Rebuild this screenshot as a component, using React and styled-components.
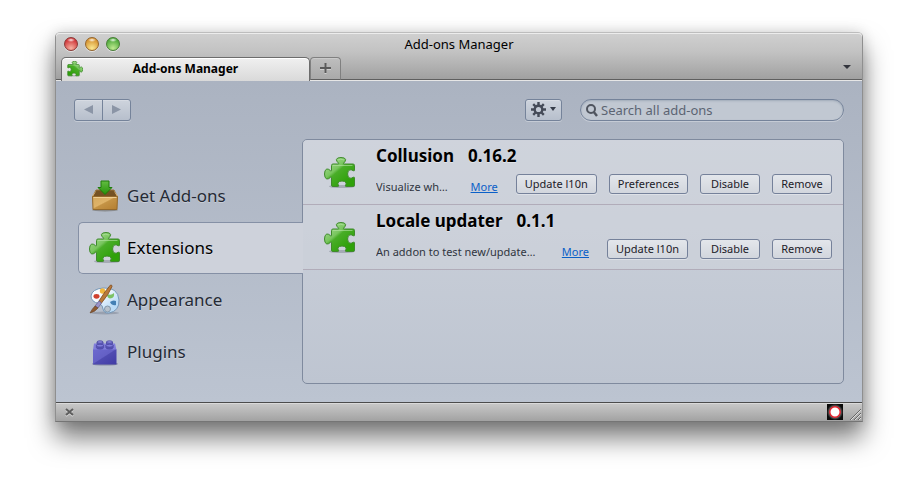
import React from "react";
import styled, { createGlobalStyle, css } from "styled-components";

const GlobalStyle = createGlobalStyle`
  *, *::before, *::after { box-sizing: border-box; }
  body {
    margin: 0;
    background: #fff;
    color: #000;
    font-family: "Lucida Grande", "Noto Sans", "Open Sans", sans-serif;
    font-size: 11px;
  }
  button, input { font: inherit; color: inherit; }
  h1, h2, p { margin: 0; }
  svg { display: block; flex: none; }
`;

const Desktop = styled.div`
  min-height: 100vh;
  display: flex;
  padding: 32px 55px 78px;
`;

const Window = styled.div`
  flex: 1;
  min-width: 0;
  display: flex;
  flex-direction: column;
  border: 1px solid #8f8f8f;
  border-top-color: #bdbdbd;
  border-bottom-color: #757575;
  border-radius: 5px 5px 0 0;
  box-shadow: 0 16px 26px rgba(0, 0, 0, 0.52), 0 0 14px rgba(0, 0, 0, 0.14);
`;

const TitleBar = styled.header`
  background: linear-gradient(#d0d0d0, #c2c2c2 40%, #9e9e9e);
  border-radius: 4px 4px 0 0;
  box-shadow: inset 0 1px #ececec;
`;

const TitleRow = styled.div`
  display: grid;
  grid-template-columns: 80px 1fr 80px;
  align-items: center;
  height: 24px;
  padding-bottom: 2px;
`;

const Lights = styled.div`
  display: flex;
  gap: 7px;
  padding-left: 8px;
`;

const Light = styled.button`
  width: 14px;
  height: 14px;
  padding: 0;
  border: 1px solid ${(p) => p.$edge};
  border-radius: 50%;
  background:
    radial-gradient(ellipse 4px 2px at 50% 2px, rgba(255, 255, 255, 0.9), transparent),
    radial-gradient(circle at 50% 85%, ${(p) => p.$glow}, ${(p) => p.$tone} 75%);
  box-shadow: 0 1px rgba(255, 255, 255, 0.5);
`;

const WindowTitle = styled.h1`
  text-align: center;
  font-size: 13px;
  font-weight: 400;
  line-height: 20px;
`;

const TabStrip = styled.div`
  display: flex;
  align-items: flex-end;
  height: 24px;
  padding: 0 10px 0 5px;
  box-shadow: inset 0 -1px #e6e6e6, inset 0 -2px #5f5f5f;
`;

const Tab = styled.button`
  display: flex;
  align-items: center;
  width: 249px;
  height: 24px;
  padding: 0 5px 2px;
  border: 1px solid #6c6c6c;
  border-bottom: 0;
  border-radius: 5px 5px 0 0;
  background: linear-gradient(#f0f0f0, #d9d9d9);
  box-shadow: inset 0 1px #fff;
  font-size: 12px;
  font-weight: 700;
  line-height: 16px;

  span { flex: 1; padding-right: 16px; text-align: center; }
`;

const NewTab = styled.button`
  display: grid;
  place-items: center;
  width: 31px;
  height: 23px;
  margin-bottom: 1px;
  padding: 0;
  border: 1px solid #808080;
  border-bottom-color: #5f5f5f;
  border-radius: 4px 4px 0 0;
  background: linear-gradient(#bebebe, #a9a9a9);
  box-shadow: inset 0 1px #cacaca;
`;

const TabList = styled.button`
  align-self: center;
  display: grid;
  place-items: center;
  width: 10px;
  height: 16px;
  margin-left: auto;
  padding: 0 0 4px;
  border: 0;
  background: none;
`;

const Content = styled.main`
  flex: 1;
  display: flex;
  flex-direction: column;
  gap: 18px;
  padding: 18px;
  background: linear-gradient(#abb3c1, #bcc4d1);
`;

const Toolbar = styled.div`
  display: flex;
  align-items: center;
`;

const raised = css`
  border: 1px solid #75839a;
  border-radius: 3px;
  background: linear-gradient(#ced4dd, #b7bfcc);
  box-shadow: 0 1px rgba(255, 255, 255, 0.3), inset 0 1px rgba(255, 255, 255, 0.2);
`;

const NavGroup = styled.div`
  ${raised}
  display: flex;
  height: 22px;
`;

const NavButton = styled.button`
  display: grid;
  place-items: center;
  width: ${(p) => (p.$divided ? 28 : 27)}px;
  padding: 0 0 2px;
  border: 0;
  border-left: ${(p) => (p.$divided ? "1px solid #75839a" : "0")};
  background: none;
`;

const ToolsButton = styled.button`
  ${raised}
  display: flex;
  align-items: center;
  justify-content: center;
  gap: 4px;
  width: 37px;
  height: 22px;
  margin: 0 18px 0 auto;
  padding: 0 0 2px;
`;

const SearchBox = styled.label`
  display: flex;
  align-items: center;
  gap: 3px;
  width: 264px;
  height: 22px;
  padding: 0 10px 0 5px;
  border: 1px solid #75839a;
  border-radius: 11px;
  background: #c1c8d2;
  box-shadow: inset 0 1px 2px rgba(90, 105, 130, 0.3), 0 1px rgba(255, 255, 255, 0.3);

  input {
    flex: 1;
    min-width: 0;
    padding: 0;
    border: 0;
    outline: 0;
    background: none;
    font-size: 13px;
    line-height: 18px;
  }
  input::placeholder { color: #5c6472; opacity: 1; }
`;

const Columns = styled.div`
  flex: 1;
  display: flex;
`;

const Sidebar = styled.nav`
  flex: none;
  width: 225px;
  margin: 0 -1px 0 4px;
  padding-top: 31px;
`;

const Category = styled.button`
  position: relative;
  display: flex;
  align-items: center;
  gap: 6px;
  width: 100%;
  height: 52px;
  padding: 0 10px;
  border: 1px solid transparent;
  border-right: 0;
  border-radius: 5px 0 0 5px;
  background: none;
  color: #252a35;
  font-size: 17px;
  line-height: 24px;
  text-align: left;
  text-shadow: 0 1px rgba(255, 255, 255, 0.3);

  ${(p) =>
    p.$selected &&
    css`
      border-color: #8590a5;
      background: #ced2db;
      color: #000;
    `}
`;

const Panel = styled.section`
  flex: 1;
  min-width: 0;
  overflow: hidden;
  border: 1px solid #7f8a9e;
  border-radius: 5px;
  background: linear-gradient(#ced3dc, #bec5d1);
`;

const Addon = styled.article`
  display: flex;
  align-items: center;
  gap: 20px;
  height: 65px;
  padding: 2px 11px 0 21px;
  border-bottom: 1px solid #b1acb9;
  background: rgba(208, 211, 219, 0.5);
`;

const AddonBody = styled.div`
  align-self: flex-start;
  flex: 1;
  min-width: 0;
`;

const AddonTitle = styled.h2`
  display: flex;
  gap: 14px;
  padding-top: 2px;
  font-size: 17px;
  line-height: 24px;
  text-shadow: 0 1px rgba(255, 255, 255, 0.4);
`;

const AddonLine = styled.div`
  display: flex;
  align-items: center;
  gap: 12px;
  margin-top: 4px;
`;

const Summary = styled.div`
  flex: 1;
  min-width: 0;
  display: flex;
  gap: 18px;
  padding: 7px 6px 0 0;
  line-height: 16px;

  p {
    flex: 1;
    min-width: 0;
    overflow: hidden;
    color: #303540;
    text-overflow: ellipsis;
    white-space: nowrap;
  }
  a { color: #0a60c8; }
`;

const ActionButton = styled.button`
  flex: none;
  min-width: 60px;
  height: 20px;
  padding: 0 8px;
  border: 1px solid #75819a;
  border-radius: 3px;
  background: linear-gradient(#e3e6eb, #d2d6dd);
  box-shadow: 0 1px rgba(255, 255, 255, 0.35);
  color: #1c2028;
  line-height: 16px;
`;

const StatusBar = styled.footer`
  display: flex;
  align-items: center;
  gap: 7px;
  height: 19px;
  padding: 0 1px 0 9px;
  border-top: 1px solid #4c4c4c;
  background: linear-gradient(#c9c9c9, #a2a2a2);
  box-shadow: inset 0 1px #dadada;
`;

const CloseBar = styled.button`
  margin-right: auto;
  padding: 0;
  border: 0;
  background: none;
`;

const PUZZLE =
  "M7.5 8.5Q7.5 7 9 7H14.2Q15 7 14.6 6.2Q12.2 4 12.4 2.5Q12.8 .5 17 .5T21.6 2.5Q21.8 4 19.6 6.2Q19.2 7 20 7H29Q30.5 7 30.5 8.5V13.2Q30.5 14.2 29.2 13.7Q27.5 12.6 26 12.8Q23.6 13.4 23.6 17T26 21.2Q27.5 21.4 29.2 20.3Q30.5 19.8 30.5 20.8V28Q30.5 29.5 29 29.5H22.2Q21 29.5 21.5 28.2Q22.6 27 22 25.8Q21 24 18 24T14 25.8Q13.4 27 14.5 28.2Q15 29.5 13.8 29.5H9Q7.5 29.5 7.5 28V20.8Q7.5 19.6 6.6 20.2Q4.8 22.2 2.8 22Q.5 21.2 .5 17T2.8 12Q4.8 11.8 6.6 13.8Q7.5 14.4 7.5 13.2Z";

function PuzzleIcon({ id, size = 32, mirrored = false }) {
  return (
    <svg width={size} height={size} viewBox="0 0 32 32" aria-hidden="true">
      <defs>
        <linearGradient id={id} x1="0.1" y1="0.1" x2="0.75" y2="0.85">
          <stop offset="0" stopColor="#a7dc93" />
          <stop offset="0.42" stopColor="#78c55e" />
          <stop offset="0.52" stopColor="#49ad28" />
          <stop offset="1" stopColor="#2fa10a" />
        </linearGradient>
      </defs>
      <g transform={mirrored ? "matrix(-1 0 0 1 32 0)" : undefined}>
        <ellipse cx="18" cy="29.5" rx="13" ry="1.6" fill="#5d6470" opacity="0.35" />
        <path d={PUZZLE} fill={`url(#${id})`} stroke="#3f8a2c" strokeWidth={size < 20 ? 1.6 : 1} />
        <path d="M9 8.5H28.5M14 3Q16 1.4 20 3" fill="none" stroke="#b7e5a6" opacity="0.6" />
      </g>
    </svg>
  );
}

function BoxIcon() {
  return (
    <svg width="32" height="32" viewBox="0 0 32 32" aria-hidden="true">
      <defs>
        <linearGradient id="carton" x1="0" y1="0" x2="1" y2="1">
          <stop offset="0" stopColor="#d5a95e" />
          <stop offset="0.45" stopColor="#dfb368" />
          <stop offset="0.5" stopColor="#c49345" />
          <stop offset="1" stopColor="#b47e30" />
        </linearGradient>
        <linearGradient id="arrow" x1="0" y1="0" x2="0" y2="1">
          <stop offset="0" stopColor="#63bd43" />
          <stop offset="1" stopColor="#259108" />
        </linearGradient>
      </defs>
      <ellipse cx="16" cy="30" rx="13" ry="1.4" fill="#4d4637" opacity="0.4" />
      <path d="M7 10H25L28.5 17H3.5Z" fill="#755223" stroke="#9a743b" />
      <path d="M7.5 10.5L3.5 17V15ZM24.5 10.5L28.5 17V15Z" fill="#d9b57a" />
      <path d="M3.5 16.5H28.5L28 29.5H4Z" fill="url(#carton)" stroke="#94692b" />
      <path d="M4.5 17.5H27.5" stroke="#efcf93" />
      <path d="M12 1H20V7.5H23L16 14.5L9 7.5H12Z" fill="url(#arrow)" stroke="#207c0a" />
    </svg>
  );
}

function PaletteIcon() {
  return (
    <svg width="32" height="32" viewBox="0 0 32 32" aria-hidden="true">
      <defs>
        <linearGradient id="palette" x1="0" y1="0" x2="1" y2="1">
          <stop offset="0.3" stopColor="#fafcff" />
          <stop offset="0.75" stopColor="#bbdcf7" />
        </linearGradient>
      </defs>
      <ellipse cx="16" cy="29" rx="14" ry="1.4" fill="#535b69" opacity="0.3" />
      <path
        d="M14 4Q29 3 30 16Q30.5 27 20 29Q15 29.5 14 25Q14 21 10 19.5Q2 18 2 12Q3 5 14 4Z"
        fill="url(#palette)" stroke="#7799b9" />
      <circle cx="18.5" cy="25" r="3" fill="#b8c2cc" stroke="#8498ab" />
      <circle cx="13.5" cy="7" r="2.7" fill="#efb63d" />
      <ellipse cx="7.5" cy="12.3" rx="3" ry="2.4" fill="#cf4130" />
      <path d="M18 10Q22 12 25 9Q26 14 21 14.5Q18 14 18 10Z" fill="#7cc265" />
      <path d="M21 18Q24 15.5 27 17V21Q23 22 21 18Z" fill="#4380b5" />
      <path d="M21.5 1Q16 7 10 17L12.5 19Q20 10 23 2.5Q23 .5 21.5 1Z" fill="#b97a3b" stroke="#7f4d20" strokeWidth="0.8" />
      <path d="M10 17L12.5 19L9 24L6 22Z" fill="#9a92c8" stroke="#69628f" strokeWidth="0.8" />
      <path d="M6 22L9 24Q6 28 1 29Q3 25 6 22Z" fill="#8d5a32" stroke="#634126" strokeWidth="0.6" />
    </svg>
  );
}

function BrickIcon() {
  return (
    <svg width="32" height="32" viewBox="0 0 32 32" aria-hidden="true">
      <defs>
        <linearGradient id="brick" x1="0" y1="0" x2="1" y2="1">
          <stop offset="0" stopColor="#6c69cf" />
          <stop offset="0.46" stopColor="#6460c5" />
          <stop offset="0.5" stopColor="#4f4bb1" />
          <stop offset="1" stopColor="#403ba5" />
        </linearGradient>
      </defs>
      <ellipse cx="16" cy="28" rx="13" ry="1.6" fill="#3b3f64" opacity="0.4" />
      <path d="M5 7.5H26L27.5 14H4Z" fill="#817edb" />
      <path d="M4 13.5H27.5V28.5H4Z" fill="url(#brick)" />
      {[11, 20.5].map((x) => (
        <g key={x} stroke="#4a469f" strokeWidth="0.8">
          <path d={`M${x - 3} 6V8.5A3 1.5 0 0 0 ${x + 3} 8.5V6Z`} fill="#625ec4" />
          <ellipse cx={x} cy="6" rx="3" ry="1.2" fill="#8e8be0" />
          <path d={`M${x - 3.6} 9.5V11.5A3.6 1.6 0 0 0 ${x + 3.6} 11.5V9.5Z`} fill="#5854b8" />
          <ellipse cx={x} cy="9.7" rx="3.6" ry="1.4" fill="#807ddc" />
        </g>
      ))}
    </svg>
  );
}

function Triangle({ points, width, height, fill }) {
  return (
    <svg width={width} height={height} viewBox={`0 0 ${width} ${height}`} aria-hidden="true">
      <polygon points={points} fill={fill} />
    </svg>
  );
}

function GearIcon() {
  return (
    <svg width="15" height="15" viewBox="0 0 15 15" aria-hidden="true">
      <g stroke="#454b58" strokeWidth="2.4">
        {[0, 45, 90, 135].map((a) => (
          <path key={a} d="M7.5 0V4M7.5 11V15" transform={`rotate(${a} 7.5 7.5)`} />
        ))}
      </g>
      <circle cx="7.5" cy="7.5" r="3.8" fill="none" stroke="#454b58" strokeWidth="2.4" />
    </svg>
  );
}

const categories = [
  { label: "Get Add-ons", icon: <BoxIcon /> },
  { label: "Extensions", icon: <PuzzleIcon id="puzzle-category" />, selected: true },
  { label: "Appearance", icon: <PaletteIcon /> },
  { label: "Plugins", icon: <BrickIcon /> },
];

const addons = [
  {
    name: "Collusion",
    version: "0.16.2",
    summary: "Visualize wh…",
    actions: ["Update l10n", "Preferences", "Disable", "Remove"],
  },
  {
    name: "Locale updater",
    version: "0.1.1",
    summary: "An addon to test new/update…",
    actions: ["Update l10n", "Disable", "Remove"],
  },
];

export default function App() {
  return (
    <Desktop>
      <GlobalStyle />
      <Window>
        <TitleBar>
          <TitleRow>
            <Lights>
              <Light aria-label="Close" $edge="#8b3936" $glow="#f7b3a2" $tone="#cf3438" />
              <Light aria-label="Minimize" $edge="#94652c" $glow="#fbe890" $tone="#d5922f" />
              <Light aria-label="Zoom" $edge="#477e35" $glow="#c0ea91" $tone="#4da83a" />
            </Lights>
            <WindowTitle>Add-ons Manager</WindowTitle>
          </TitleRow>
          <TabStrip>
            <Tab>
              <PuzzleIcon id="puzzle-tab" size={16} mirrored />
              <span>Add-ons Manager</span>
            </Tab>
            <NewTab aria-label="Open a new tab">
              <svg width="11" height="11" viewBox="0 0 11 11" aria-hidden="true">
                <path d="M5.5 1V11M0 6H11" stroke="#d0d0d0" strokeWidth="2" />
                <path d="M5.5 0V10M0 5H11" stroke="#5b5b5b" strokeWidth="2" />
              </svg>
            </NewTab>
            <TabList aria-label="List all tabs">
              <Triangle width={8} height={4} points="0,0 8,0 4,4" fill="#33353d" />
            </TabList>
          </TabStrip>
        </TitleBar>

        <Content>
          <Toolbar>
            <NavGroup>
              <NavButton aria-label="Back" disabled>
                <Triangle width={9} height={9} points="9,0 9,9 0,4.5" fill="#8b95a6" />
              </NavButton>
              <NavButton aria-label="Forward" disabled $divided>
                <Triangle width={9} height={9} points="0,0 9,4.5 0,9" fill="#8b95a6" />
              </NavButton>
            </NavGroup>
            <ToolsButton aria-label="Tools for all add-ons">
              <GearIcon />
              <Triangle width={6} height={4} points="0,0 6,0 3,4" fill="#363c49" />
            </ToolsButton>
            <SearchBox>
              <svg width="12" height="13" viewBox="0 0 12 13" aria-hidden="true">
                <circle cx="5" cy="5" r="4" fill="none" stroke="#50555f" strokeWidth="2" />
                <path d="M7.8 8L11 12" stroke="#50555f" strokeWidth="2.4" />
              </svg>
              <input type="text" aria-label="Search all add-ons" placeholder="Search all add-ons" />
            </SearchBox>
          </Toolbar>

          <Columns>
            <Sidebar>
              {categories.map((c) => (
                <Category key={c.label} $selected={c.selected}>
                  {c.icon}
                  {c.label}
                </Category>
              ))}
            </Sidebar>
            <Panel>
              {addons.map((a) => (
                <Addon key={a.name}>
                  <PuzzleIcon id={`puzzle-${a.version}`} />
                  <AddonBody>
                    <AddonTitle>
                      <span>{a.name}</span>
                      <span>{a.version}</span>
                    </AddonTitle>
                    <AddonLine>
                      <Summary>
                        <p>{a.summary}</p>
                        <a href="#more">More</a>
                      </Summary>
                      {a.actions.map((label) => (
                        <ActionButton key={label}>{label}</ActionButton>
                      ))}
                    </AddonLine>
                  </AddonBody>
                </Addon>
              ))}
            </Panel>
          </Columns>
        </Content>

        <StatusBar>
          <CloseBar aria-label="Close add-on bar">
            <svg width="9" height="9" viewBox="0 0 9 9" aria-hidden="true">
              <path d="M1 2L8 8M8 2L1 8" stroke="#dadada" strokeWidth="2" />
              <path d="M1 1L8 7M8 1L1 7" stroke="#5e5e5e" strokeWidth="2" />
            </svg>
          </CloseBar>
          <svg width="16" height="16" viewBox="0 0 16 16" aria-hidden="true">
            <defs>
              <radialGradient id="halo">
                <stop offset="0.6" stopColor="#8a8a8a" />
                <stop offset="1" stopColor="#0a0a0a" />
              </radialGradient>
            </defs>
            <rect width="16" height="16" fill="url(#halo)" />
            <circle cx="8" cy="8" r="5.2" fill="#fff" stroke="#e8202c" strokeWidth="1.4" />
          </svg>
          <svg width="11" height="15" viewBox="0 0 11 15" aria-hidden="true">
            <path d="M1 15L11 5M5 15L11 9M9 15L11 13" stroke="#dedede" />
            <path d="M0 15L11 4M4 15L11 8M8 15L11 12" stroke="#666" />
          </svg>
        </StatusBar>
      </Window>
    </Desktop>
  );
}
